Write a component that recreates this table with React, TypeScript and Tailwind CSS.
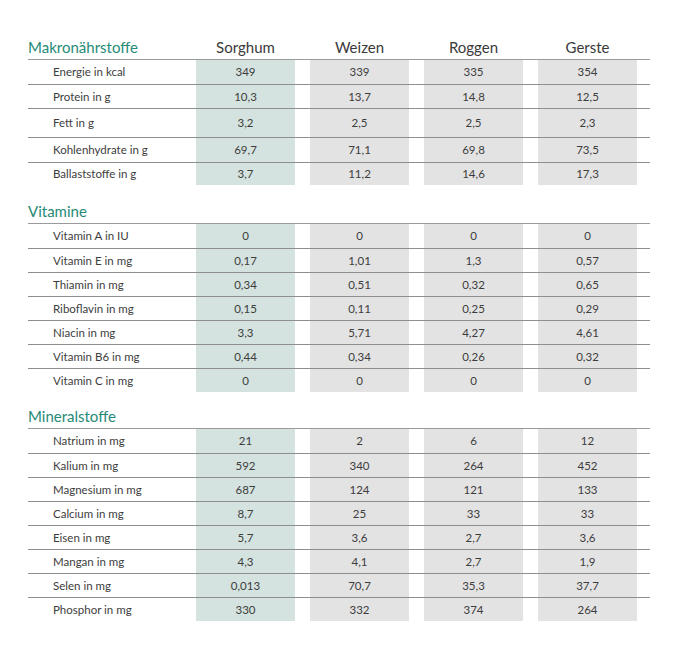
import React from "react";

type Row = { label: string; v: string[]; h?: string };

const makro: Row[] = [
  { label: "Energie in kcal", v: ["349", "339", "335", "354"], h: "h-[24px]" },
  { label: "Protein in g", v: ["10,3", "13,7", "14,8", "12,5"], h: "h-[24px]" },
  { label: "Fett in g", v: ["3,2", "2,5", "2,5", "2,3"], h: "h-[29px]" },
  { label: "Kohlenhydrate in g", v: ["69,7", "71,1", "69,8", "73,5"], h: "h-[25px]" },
  { label: "Ballaststoffe in g", v: ["3,7", "11,2", "14,6", "17,3"], h: "h-[23px]" },
];

const vitamine: Row[] = [
  { label: "Vitamin A in IU", v: ["0", "0", "0", "0"] },
  { label: "Vitamin E in mg", v: ["0,17", "1,01", "1,3", "0,57"] },
  { label: "Thiamin in mg", v: ["0,34", "0,51", "0,32", "0,65"] },
  { label: "Riboflavin in mg", v: ["0,15", "0,11", "0,25", "0,29"] },
  { label: "Niacin in mg", v: ["3,3", "5,71", "4,27", "4,61"] },
  { label: "Vitamin B6 in mg", v: ["0,44", "0,34", "0,26", "0,32"] },
  { label: "Vitamin C in mg", v: ["0", "0", "0", "0"] },
];

const mineral: Row[] = [
  { label: "Natrium in mg", v: ["21", "2", "6", "12"] },
  { label: "Kalium in mg", v: ["592", "340", "264", "452"] },
  { label: "Magnesium in mg", v: ["687", "124", "121", "133"] },
  { label: "Calcium in mg", v: ["8,7", "25", "33", "33"] },
  { label: "Eisen in mg", v: ["5,7", "3,6", "2,7", "3,6"] },
  { label: "Mangan in mg", v: ["4,3", "4,1", "2,7", "1,9"] },
  { label: "Selen in mg", v: ["0,013", "70,7", "35,3", "37,7"] },
  { label: "Phosphor in mg", v: ["330", "332", "374", "264"] },
];

const grid = "grid grid-cols-[153px_99px_99px_99px_99px_1fr] gap-x-[15px]";

function Heading({ title, cols }: { title: string; cols?: boolean }) {
  return (
    <div className={`${grid} h-[24px] items-center border-b-[1.5px] border-[#9a9a9a]`}>
      <div className="text-[15px] leading-none text-[#268a77] whitespace-nowrap">{title}</div>
      {cols &&
        ["Sorghum", "Weizen", "Roggen", "Gerste"].map((c) => (
          <div key={c} className="text-center text-[15px] leading-none text-[#3a3a3a]">
            {c}
          </div>
        ))}
    </div>
  );
}

function Rows({ rows }: { rows: Row[] }) {
  return (
    <div>
      {rows.map((r, i) => (
        <div
          key={r.label}
          className={`${grid} ${r.h ?? "h-[24px]"} ${i > 0 ? "border-t border-[#8e8e8e]" : ""}`}
        >
          <div className="pl-[25px] flex items-center text-[11.5px] text-[#3d3d3d] whitespace-nowrap">
            {r.label}
          </div>
          {r.v.map((v, j) => (
            <div
              key={j}
              className={`flex items-center justify-center text-[11.5px] text-[#3d3d3d] ${
                j === 0 ? "bg-[#d4e3df]" : "bg-[#e3e3e3]"
              }`}
            >
              {v}
            </div>
          ))}
          <div />
        </div>
      ))}
    </div>
  );
}

export default function App() {
  return (
    <div
      className="w-[680px] h-[663px] bg-white pt-[36px] pl-[28px]"
      style={{ fontFamily: "Lato, 'Open Sans', sans-serif" }}
    >
      <div className="w-[622px]">
        <Heading title="Makronährstoffe" cols />
        <Rows rows={makro} />
        <div className="pt-[15px]">
          <Heading title="Vitamine" />
        </div>
        <Rows rows={vitamine} />
        <div className="pt-[13px]">
          <Heading title="Mineralstoffe" />
        </div>
        <Rows rows={mineral} />
      </div>
    </div>
  );
}
